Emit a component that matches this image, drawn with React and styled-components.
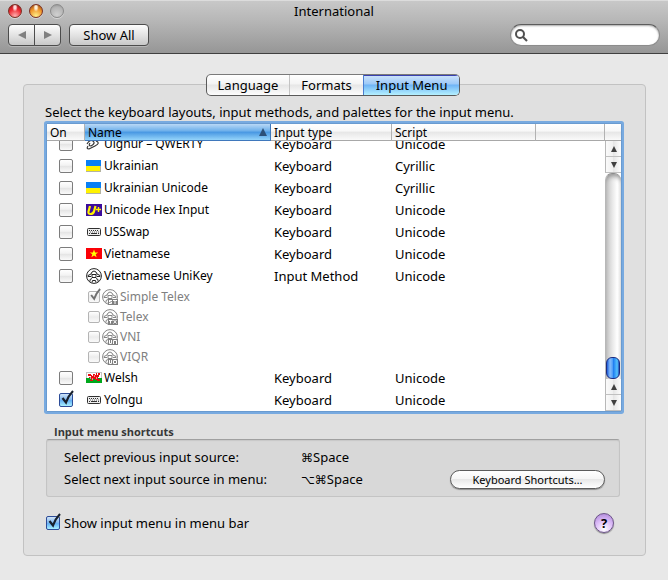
import React, { useLayoutEffect, useRef, useState } from "react";
import styled, { createGlobalStyle, css } from "styled-components";

const GlobalStyle = createGlobalStyle`
  *, *::before, *::after { box-sizing: border-box; }
  html { background: #e8e8e8; }
  body { margin: 0; }
  body, button, input, table {
    font-family: "Lucida Grande", "Noto Sans", "DejaVu Sans", sans-serif;
    font-size: 13px;
    line-height: 18px;
    color: #000;
  }
  button { cursor: default; }
`;

const Window = styled.div`
  display: flex;
  flex-direction: column;
  min-height: 100vh;
  background: #e8e8e8;
`;

const Header = styled.header`
  height: 54px;
  background: linear-gradient(#c8c8c8, #b8b8b8 35%, #969696);
  border-top: 1px solid #dcdcdc;
  border-bottom: 1px solid #404040;
`;

const TitleBar = styled.div`
  display: grid;
  grid-template-columns: 1fr auto 1fr;
  align-items: center;
  height: 20px;
  padding: 0 8px;
`;

const Title = styled.h1`
  margin: 0;
  font-size: 13px;
  font-weight: 400;
`;

const Lights = styled.div`
  display: flex;
  gap: 7px;
`;

const lightFills = {
  close: "radial-gradient(ellipse at 50% 20%, #ffd9d9 0 12%, transparent 32%), radial-gradient(circle at 50% 90%, #ffb0b0, #ee2a32 55%, #8c0f12)",
  minimize: "radial-gradient(ellipse at 50% 20%, #fff0d8 0 12%, transparent 32%), radial-gradient(circle at 50% 90%, #fff08a, #f0962c 55%, #8c3d08)",
  zoom: "radial-gradient(circle at 50% 80%, #d0d0d0, #b4b4b4 65%, #8c8c8c)",
};

const Light = styled.button`
  width: 14px;
  height: 14px;
  padding: 0;
  border: 1px solid ${(p) => (p.$kind === "zoom" ? "#8a8a8a" : "#7a3024")};
  border-radius: 50%;
  background: ${(p) => lightFills[p.$kind]};
  box-shadow: 0 1px 0 #d6d6d6;
`;

const ToolBar = styled.div`
  display: flex;
  align-items: flex-start;
  gap: 8px;
  padding: 3px 8px;
`;

const Segments = styled.div`
  display: flex;
`;

const ToolButton = styled.button`
  display: flex;
  align-items: center;
  justify-content: center;
  min-width: 80px;
  height: 22px;
  padding: 0 12px;
  border: 1px solid #4c4c4c;
  border-radius: 4px;
  background: linear-gradient(#fdfdfd, #dedede 60%, #c8c8c8);
  box-shadow: 0 1px 0 #b8b8b8;

  ${Segments} & {
    min-width: 0;
    width: 27px;
    padding: 0;
  }
  ${Segments} &:first-child { border-radius: 4px 0 0 4px; }
  ${Segments} &:last-child { border-radius: 0 4px 4px 0; margin-left: -1px; }
`;

const SearchField = styled.label`
  display: flex;
  align-items: center;
  gap: 4px;
  width: 150px;
  height: 22px;
  margin-left: auto;
  padding: 0 8px 0 4px;
  border: 1px solid #8c8c8c;
  border-top: 1px solid #5c5c5c;
  border-radius: 11px;
  background: #fff;
  box-shadow: inset 0 1px 2px #a8a8a8;
`;

const SearchInput = styled.input`
  flex: 1;
  min-width: 0;
  border: 0;
  outline: 0;
  background: none;
`;

const Panel = styled.main`
  display: flex;
  flex-direction: column;
  margin: 30px 22px 24px 23px;
  padding: 0 23px 22px 20px;
  border: 1px solid #c2c2c2;
  border-radius: 4px;
  background: #e0e0e0;
`;

const Tabs = styled.div`
  display: flex;
  align-self: center;
  height: 22px;
  margin-top: -11px;
  border: 1px solid #5a5a5a;
  border-top-color: #7a7a7a;
  border-radius: 5px;
  background: linear-gradient(#fff, #f4f4f4 45%, #e6e6e6 50%, #fdfdfd);
  overflow: hidden;
`;

const Tab = styled.button`
  padding: 0 11px;
  border: 0;
  border-left: 1px solid #c4c4c4;
  background: none;
  &:first-child { border-left: 0; }
  ${(p) =>
    p.$active &&
    css`
      padding: 0 12px;
      border-left-color: #4a7ed0;
      background: linear-gradient(#cfe4fb, #9cc9f8 45%, #6fb4f6 50%, #b4f0ff);
      box-shadow: inset 0 1px 0 #3940b0;
    `}
`;

const Intro = styled.p`
  margin: 7px 0 0 1px;
`;

const ListFrame = styled.div`
  display: flex;
  margin: 2px 0 0 2px;
  border: 1px solid #6a9bd0;
  background: #fff;
  box-shadow: 0 0 0 2px #78aae0;
  border-radius: 1px;
`;

const Scroller = styled.div`
  flex: 1;
  min-width: 0;
  height: 287px;
  overflow: hidden;
`;

const Table = styled.table`
  width: 100%;
  table-layout: fixed;
  border-collapse: separate;
  border-spacing: 0;
`;

const headFill = "linear-gradient(#fff, #f8f8f8 45%, #e6e6e6 50%, #fafafa)";

const HeadCell = styled.th`
  position: sticky;
  top: 0;
  z-index: 1;
  height: 17px;
  padding: 0 3px;
  border-right: 1px solid #b2b2b2;
  border-bottom: 1px solid #a8a8a8;
  background: ${headFill};
  font-size: 12px;
  font-weight: 400;
  line-height: 15px;
  text-align: left;
  ${(p) =>
    p.$sorted &&
    css`
      border-color: #3f78bc;
      background: linear-gradient(#b9d8f6, #6aaeea 45%, #4696e2 50%, #94d4fa);
    `}
`;

const HeadLabel = styled.span`
  display: flex;
  align-items: center;
  justify-content: space-between;
  height: 15px;
`;

const Cell = styled.td`
  height: ${(p) => (p.$sub ? 20 : 22)}px;
  padding: 0 0 ${(p) => (p.$sub ? 0 : 1)}px ${(p) => p.$inset || 3}px;
  color: ${(p) => (p.$sub ? "#808080" : "#000")};
  white-space: nowrap;
`;

const NameLine = styled.label`
  display: flex;
  align-items: center;
  gap: 2px;
  height: 20px;
  padding-top: ${(p) => (p.$sub ? 0 : 1)}px;
  padding-left: ${(p) => (p.$sub ? 2 : 0)}px;
  font-size: 12px;
`;

const CheckWrap = styled.span`
  position: relative;
  display: block;
  flex: none;
  width: ${(p) => (p.$small ? 12 : 14)}px;
  height: ${(p) => (p.$small ? 12 : 14)}px;
`;

const CheckInput = styled.input`
  appearance: none;
  display: block;
  width: 100%;
  height: 100%;
  margin: 0;
  border: 1px solid #7c7c7c;
  border-radius: 2px;
  background: linear-gradient(#fff, #f2f2f2 45%, #e4e4e4 50%, #fafafa);
  &:checked {
    border-color: #2c4c98;
    background: linear-gradient(#d0e4f8, #7ab4ee 50%, #64b0f4 55%, #a8f0ff);
  }
  &:disabled {
    border-color: #b4b4b4;
    background: linear-gradient(#fff, #ececec 50%, #fafafa);
  }
`;

const CheckMark = styled.svg`
  position: absolute;
  left: 1px;
  bottom: 2px;
  width: 100%;
  height: 100%;
  overflow: visible;
  pointer-events: none;
`;

const ScrollColumn = styled.div`
  display: flex;
  flex-direction: column;
  width: 16px;
`;

const Corner = styled.div`
  height: 17px;
  border-bottom: 1px solid #a8a8a8;
  background: ${headFill};
`;

const ArrowButton = styled.button`
  display: flex;
  align-items: center;
  justify-content: center;
  height: 16px;
  padding: 0;
  border: 0;
  border-left: 1px solid #b8b8b8;
  border-bottom: 1px solid #c0c0c0;
  background: linear-gradient(90deg, #fafafa, #f0f0f0 45%, #e6e6e6 50%, #fdfdfd);
`;

const Track = styled.div`
  display: flex;
  flex: 1;
  flex-direction: column;
  justify-content: flex-end;
  border-left: 1px solid #b8b8b8;
  border-top: 1px solid #8c8c8c;
  border-radius: 7px 7px 0 0;
  background: linear-gradient(90deg, #c4c4c4, #eaeaea 45%, #fff 75%, #eee);
  box-shadow: inset 0 4px 5px -2px #8c8c8c;
`;

const Thumb = styled.div`
  height: 22px;
  margin-right: 1px;
  border: 1px solid #1c2c80;
  border-radius: 6px;
  background: linear-gradient(90deg, #1c5cd8, #86bcfa 25%, #58a4f8 45%, #1e7af0 52%, #54c4ff 85%, #2450b8);
`;

const GroupTitle = styled.h2`
  margin: 13px 0 0 10px;
  font-family: "Open Sans", "Noto Sans", sans-serif;
  font-size: 11px;
  font-weight: 700;
  line-height: 14px;
  color: #383838;
`;

const Group = styled.section`
  display: flex;
  align-items: flex-end;
  justify-content: space-between;
  height: 58px;
  margin: 0 2px;
  padding: 6px 14px 7px 17px;
  border: 1px solid #c4c4c4;
  border-top: 1px solid #a0a0a0;
  border-radius: 3px;
  background: #d8d8d8;
  box-shadow: inset 0 1px 1px #c8c8c8;
`;

const Shortcuts = styled.dl`
  display: grid;
  grid-template-columns: 237px auto;
  align-self: flex-start;
  grid-auto-rows: 22px;
  margin: 0;
  line-height: 22px;
`;

const ShortcutText = styled.dd`
  margin: 0;
`;

const KeySymbols = styled.span`
  font-family: "DejaVu Sans", sans-serif;
  font-size: 12px;
`;

const PillButton = styled.button`
  width: 155px;
  height: 19px;
  padding: 0;
  border: 1px solid #5c5c5c;
  border-radius: 10px;
  background: linear-gradient(#fff, #f6f6f6 45%, #e8e8e8 50%, #fff);
  font-size: 11px;
  line-height: 16px;
  box-shadow: 0 1px 1px #909090;
`;

const Footer = styled.footer`
  display: flex;
  align-items: center;
  justify-content: space-between;
  margin-top: 16px;
  padding: 0 8px 0 2px;
`;

const FooterLabel = styled.label`
  display: flex;
  align-items: center;
  gap: 4px;
`;

const HelpButton = styled.button`
  width: 20px;
  height: 20px;
  padding: 0;
  border: 1px solid #6c5488;
  border-radius: 50%;
  background: radial-gradient(circle at 50% 85%, #fff, #dcbcf8 50%, #a880d4);
  font-weight: 700;
  line-height: 16px;
  box-shadow: 0 1px 1px #888;
`;

const Icon = styled.svg`
  flex: none;
  display: block;
`;

function Arrow({ dir, size = 8, fill = "#404040" }) {
  const shapes = {
    up: "M4 0 8 8H0Z",
    down: "M0 0H8L4 8Z",
    left: "M0 4 8 0V8Z",
    right: "M8 4 0 0V8Z",
  };
  return (
    <Icon width={size} height={size} viewBox="0 0 8 8" aria-hidden="true">
      <path d={shapes[dir]} fill={fill} />
    </Icon>
  );
}

const badgePaths = {
  ST: "M7 11.5h3M7.5 11.5v1.500h2v1.500H7M11 11.5h4M13 11.5v3.500",
  TX: "M7 11.5h3.5M8.5 11.5v3M11.5 11l3 3.5M14.5 11l-3 3.5",
  VN: "M7.5 11v3.500h2V11M11.5 15v-3.500h3V15",
  VQ: "M7.5 11v3.500h2V11M11.5 11.5h3v3h-3z",
};

function UniKeyIcon({ badge }) {
  const ink = badge ? "#858585" : "#222";
  return (
    <Icon width="16" height="16" viewBox="0 0 16 16" fill="none" stroke={ink} aria-hidden="true">
      <circle cx="8" cy="8" r="7.4" fill="#fff" />
      <path d="M2 8.5V7.500L5 6 6 4 8 3 10 4 11 6 14 7.500V8.500H11M2 8.5H5M5.500 6.500h5" />
      <path d="M6 7v2.500h4V7M4 13.500V11.500L6 10.500M12 13.500V11.500L10 10.500M6 14.500 6.500 12.500h3L10 14.500" />
      {badge && (
        <>
          <rect x="6" y="10" width="10" height="6" fill="#808080" stroke="none" />
          <path d={badgePaths[badge]} stroke="#fff" />
        </>
      )}
    </Icon>
  );
}

function SourceIcon({ kind }) {
  if (kind.startsWith("unikey")) return <UniKeyIcon badge={kind.split("-")[1]} />;
  const art = {
    ukraine: (
      <>
        <rect y="2" width="15" height="12" fill="#b4b4a0" />
        <rect y="2" width="15" height="6" fill="#0a80f4" />
        <rect y="8" width="14" height="5" fill="#fff200" />
      </>
    ),
    hex: (
      <>
        <rect y="2" width="16" height="12" fill="#3c0c9c" />
        <path d="M4 4 2.5 9.5Q2 12 4.5 12T8 9.5L9.5 4" fill="none" stroke="#fff200" strokeWidth="2.2" />
        <path d="M10 7.5h5M12.5 5v5" stroke="#fff200" strokeWidth="1.4" />
      </>
    ),
    keyboard: (
      <>
        <rect x="1.5" y="4.5" width="13" height="7" rx="1" fill="#eee" stroke="#303030" />
        <path d="M3 6.5h10M3 9.5h1M12 9.5h1" stroke="#303030" strokeDasharray="1 1" />
        <path d="M4 8h9" stroke="#606060" strokeDasharray="1 1" />
        <path d="M5 9.5h6" stroke="#303030" />
      </>
    ),
    vietnam: (
      <>
        <rect y="2" width="16" height="11" fill="#fb0007" />
        <path d="m8 3.5 1.1 2.9h3.1L9.7 8.2l.9 3L8 9.4l-2.6 1.8.9-3-2.5-1.8h3.1z" fill="#ff0" />
      </>
    ),
    wales: (
      <>
        <rect y="2" width="16" height="11" fill="#c4c4c4" />
        <rect x="1" y="3" width="14" height="5" fill="#fff" />
        <rect x="0" y="8" width="16" height="5" fill="#00a81c" />
        <path d="M2 4h3v1h1v1h1V4h2v1h1V3h1v2h1V3h2v2h-1v2h-1v2h2v2h-3v-1H9V9H7v2H4v-1h1V8H3V7h2V6H2z" fill="#e80c10" />
        <path d="M4 8h1M8 6h1M10 8h1M6 9h1" stroke="#fff" />
      </>
    ),
    squiggle: (
      <path
        d="M1 8Q4 3 7 5T5 10Q2 10 4 7M7 5l3-2 1 2 4-2M10 5Q15 7 9 10T3 13Q0 13 2 10"
        fill="none"
        stroke="#333"
        strokeWidth="1.2"
      />
    ),
  };
  return (
    <Icon width="16" height="16" viewBox="0 0 16 16" aria-hidden="true">
      {art[kind]}
    </Icon>
  );
}

function Check({ small, defaultChecked = false, ...rest }) {
  const [on, setOn] = useState(defaultChecked);
  return (
    <CheckWrap $small={small}>
      <CheckInput type="checkbox" checked={on} onChange={(e) => setOn(e.target.checked)} {...rest} />
      {on && (
        <CheckMark viewBox="0 0 14 14" aria-hidden="true">
          <path
            d="M2.5 7 6 11.5Q8.500 4.500 13 0"
            fill="none"
            stroke={rest.disabled ? "#707070" : "#18202c"}
            strokeWidth="2.2"
          />
        </CheckMark>
      )}
    </CheckWrap>
  );
}

const sources = [
  { name: "Uighur – QWERTY", icon: "squiggle", type: "Keyboard", script: "Unicode" },
  { name: "Ukrainian", icon: "ukraine", type: "Keyboard", script: "Cyrillic" },
  { name: "Ukrainian Unicode", icon: "ukraine", type: "Keyboard", script: "Cyrillic" },
  { name: "Unicode Hex Input", icon: "hex", type: "Keyboard", script: "Unicode" },
  { name: "USSwap", icon: "keyboard", type: "Keyboard", script: "Unicode" },
  { name: "Vietnamese", icon: "vietnam", type: "Keyboard", script: "Unicode" },
  { name: "Vietnamese UniKey", icon: "unikey", type: "Input Method", script: "Unicode" },
  { name: "Simple Telex", icon: "unikey-ST", sub: true, on: true },
  { name: "Telex", icon: "unikey-TX", sub: true },
  { name: "VNI", icon: "unikey-VN", sub: true },
  { name: "VIQR", icon: "unikey-VQ", sub: true },
  { name: "Welsh", icon: "wales", type: "Keyboard", script: "Unicode" },
  { name: "Yolngu", icon: "keyboard", type: "Keyboard", script: "Unicode", on: true },
];

function SourceRow({ source }) {
  const { name, icon, type, script, sub, on } = source;
  return (
    <tr>
      <Cell $sub={sub} $inset={12}>
        {!sub && <Check aria-label={name} defaultChecked={on} />}
      </Cell>
      <Cell $sub={sub} $inset={1}>
        <NameLine $sub={sub} as={sub ? "label" : "span"}>
          {sub && <Check small disabled defaultChecked={on} />}
          <SourceIcon kind={icon} />
          {name}
        </NameLine>
      </Cell>
      <Cell $sub={sub}>{type}</Cell>
      <Cell $sub={sub}>{script}</Cell>
      <Cell $sub={sub} />
    </tr>
  );
}

function SourceList() {
  const scroller = useRef(null);
  useLayoutEffect(() => {
    scroller.current.scrollTop = scroller.current.scrollHeight;
  }, []);
  const scroll = (by) => scroller.current.scrollBy(0, by);
  return (
    <ListFrame>
      <Scroller ref={scroller}>
        <Table>
          <colgroup>
            <col width="38" />
            <col width="186" />
            <col width="121" />
            <col width="144" />
            <col />
          </colgroup>
          <thead>
            <tr>
              <HeadCell>On</HeadCell>
              <HeadCell $sorted aria-sort="ascending">
                <HeadLabel>
                  Name
                  <Arrow dir="up" fill="#2c5078" />
                </HeadLabel>
              </HeadCell>
              <HeadCell>Input type</HeadCell>
              <HeadCell>Script</HeadCell>
              <HeadCell />
            </tr>
          </thead>
          <tbody>
            {sources.map((s) => (
              <SourceRow key={s.name} source={s} />
            ))}
          </tbody>
        </Table>
      </Scroller>
      <ScrollColumn>
        <Corner />
        <ArrowButton aria-label="Scroll up" onClick={() => scroll(-22)}><Arrow dir="up" size={6} /></ArrowButton>
        <ArrowButton aria-label="Scroll down" onClick={() => scroll(22)}><Arrow dir="down" size={6} /></ArrowButton>
        <Track><Thumb /></Track>
        <ArrowButton aria-label="Scroll up" onClick={() => scroll(-22)}><Arrow dir="up" size={6} /></ArrowButton>
        <ArrowButton aria-label="Scroll down" onClick={() => scroll(22)}><Arrow dir="down" size={6} /></ArrowButton>
      </ScrollColumn>
    </ListFrame>
  );
}

export default function App() {
  return (
    <Window>
      <GlobalStyle />
      <Header>
        <TitleBar>
          <Lights>
            <Light $kind="close" aria-label="Close" />
            <Light $kind="minimize" aria-label="Minimize" />
            <Light $kind="zoom" aria-label="Zoom" disabled />
          </Lights>
          <Title>International</Title>
        </TitleBar>
        <ToolBar>
          <Segments>
            <ToolButton aria-label="Back"><Arrow dir="left" fill="#808080" /></ToolButton>
            <ToolButton aria-label="Forward"><Arrow dir="right" fill="#808080" /></ToolButton>
          </Segments>
          <ToolButton>Show All</ToolButton>
          <SearchField>
            <Icon width="13" height="13" viewBox="0 0 13 13" fill="none" stroke="#505050" aria-hidden="true">
              <circle cx="5" cy="5" r="4" strokeWidth="2" />
              <path d="m8 8 4 4" strokeWidth="2.2" />
            </Icon>
            <SearchInput type="search" aria-label="Search" />
          </SearchField>
        </ToolBar>
      </Header>
      <Panel>
        <Tabs role="tablist">
          <Tab role="tab">Language</Tab>
          <Tab role="tab">Formats</Tab>
          <Tab role="tab" $active aria-selected="true">Input Menu</Tab>
        </Tabs>
        <Intro>Select the keyboard layouts, input methods, and palettes for the input menu.</Intro>
        <SourceList />
        <GroupTitle>Input menu shortcuts</GroupTitle>
        <Group>
          <Shortcuts>
            <dt>Select previous input source:</dt>
            <ShortcutText><KeySymbols>⌘</KeySymbols>Space</ShortcutText>
            <dt>Select next input source in menu:</dt>
            <ShortcutText><KeySymbols>⌥⌘</KeySymbols>Space</ShortcutText>
          </Shortcuts>
          <PillButton>Keyboard Shortcuts…</PillButton>
        </Group>
        <Footer>
          <FooterLabel>
            <Check defaultChecked />
            Show input menu in menu bar
          </FooterLabel>
          <HelpButton aria-label="Help">?</HelpButton>
        </Footer>
      </Panel>
    </Window>
  );
}
